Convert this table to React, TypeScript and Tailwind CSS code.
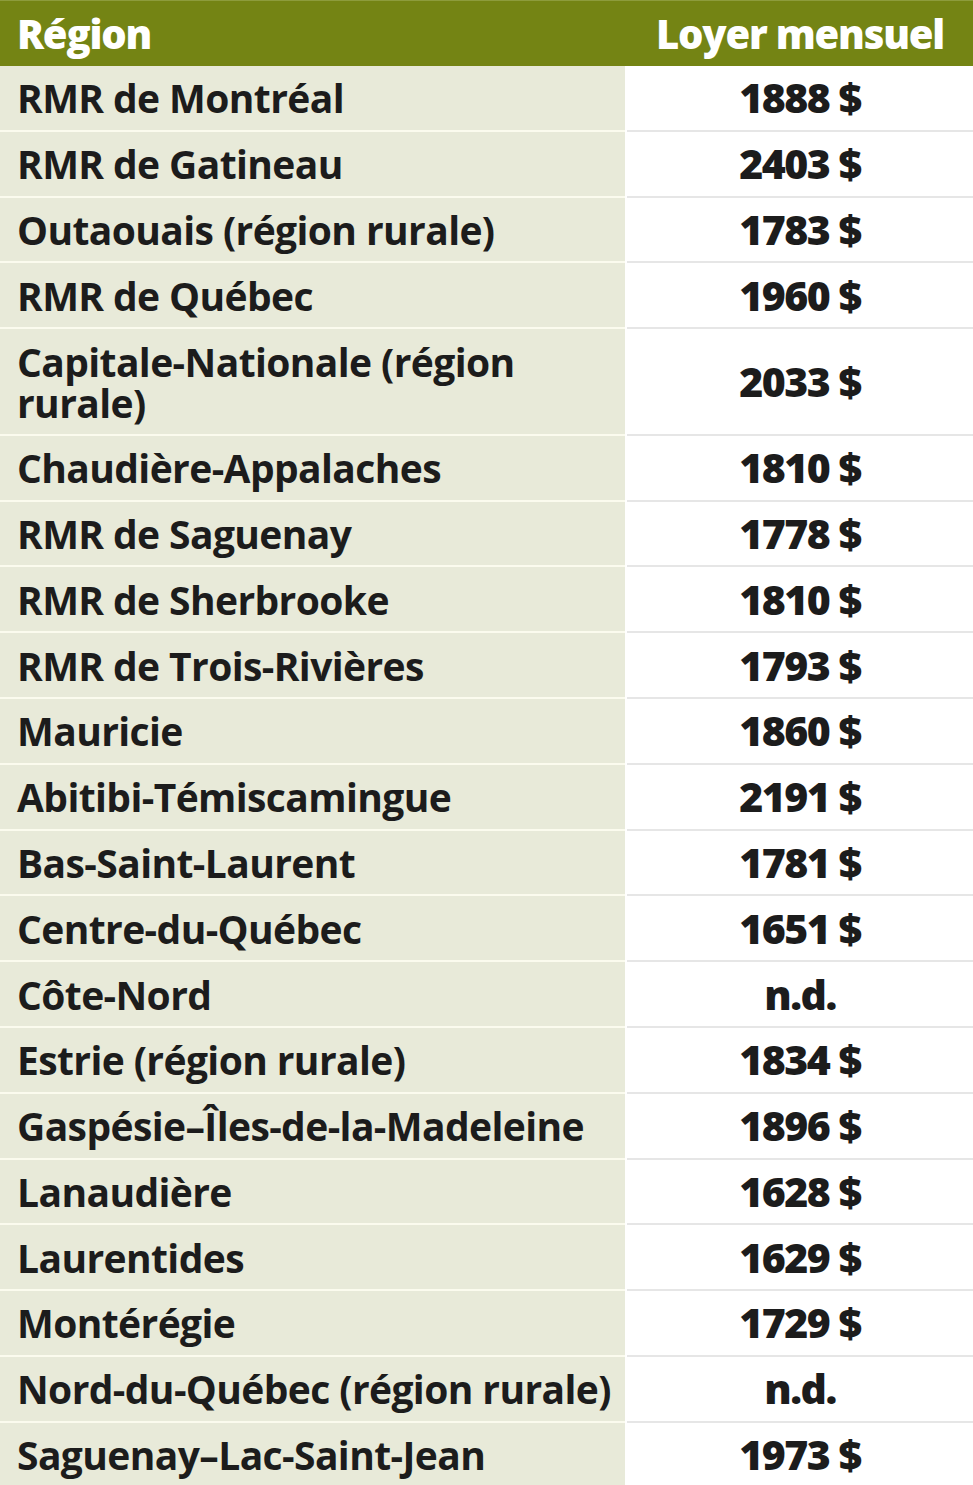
const rows: [string, string][] = [
  ["RMR de Montréal", "1888 $"],
  ["RMR de Gatineau", "2403 $"],
  ["Outaouais (région rurale)", "1783 $"],
  ["RMR de Québec", "1960 $"],
  ["Capitale-Nationale (région rurale)", "2033 $"],
  ["Chaudière-Appalaches", "1810 $"],
  ["RMR de Saguenay", "1778 $"],
  ["RMR de Sherbrooke", "1810 $"],
  ["RMR de Trois-Rivières", "1793 $"],
  ["Mauricie", "1860 $"],
  ["Abitibi-Témiscamingue", "2191 $"],
  ["Bas-Saint-Laurent", "1781 $"],
  ["Centre-du-Québec", "1651 $"],
  ["Côte-Nord", "n.d."],
  ["Estrie (région rurale)", "1834 $"],
  ["Gaspésie–Îles-de-la-Madeleine", "1896 $"],
  ["Lanaudière", "1628 $"],
  ["Laurentides", "1629 $"],
  ["Montérégie", "1729 $"],
  ["Nord-du-Québec (région rurale)", "n.d."],
  ["Saguenay–Lac-Saint-Jean", "1973 $"],
]

export default function App() {
  return (
    <div className="w-[973px] h-[1485px] overflow-hidden bg-white text-[#1c1c1c] font-['Open_Sans',sans-serif]">
      {/* en-tête */}
      <div className="flex h-[66px] items-center bg-[#748414] border-t border-[#8d9c3c] text-white font-extrabold text-[40px] leading-none tracking-[-1.2px]">
        <div className="w-[625px] pl-[17px]">Région</div>
        <div className="flex-1 ml-[2px] text-center">Loyer mensuel</div>
      </div>

      {rows.map(([region, loyer]) => (
        <div key={region} className="flex">
          <div className="w-[625px] bg-[#e8ead9] border-b-2 border-[#fbfbee] pl-[17px] pr-[4px] py-[11.4px] text-[39px] leading-[41px] font-bold tracking-[-0.6px]">
            {region}
          </div>
          <div className="flex-1 ml-[2px] flex items-center justify-center border-b-2 border-[#e6e6e6] text-[41px] leading-[41px] font-extrabold tracking-[-1.5px]">
            {loyer}
          </div>
        </div>
      ))}
    </div>
  )
}
